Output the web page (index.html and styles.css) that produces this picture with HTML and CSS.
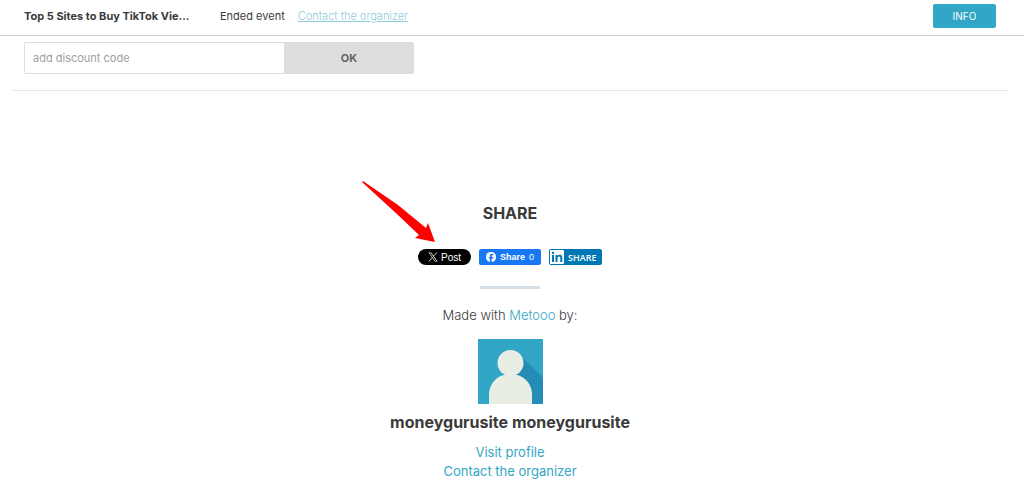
FILE: index.html
```html
<!DOCTYPE html>
<html lang="en">
<head>
	<meta charset="UTF-8">
	<title>Top 5 Sites to Buy TikTok Views</title>
	<link rel="stylesheet" href="styles.css">
</head>
<body>
	<header class="topbar">
		<strong class="event-title">Top 5 Sites to Buy TikTok Vie...</strong>
		<span class="event-status">Ended event</span>
		<a class="topbar-contact" href="#organizer">Contact the organizer</a>
		<button class="info-btn" type="button">INFO</button>
	</header>
	<main class="container">
		<form class="discount">
			<input type="text" placeholder="add discount code" aria-label="Discount code">
			<button type="button">OK</button>
		</form>
		<section class="share">
			<h2>SHARE</h2>
			<div class="share-buttons">
				<a class="share-btn x-btn" href="#x">
					<svg width="10" height="10" viewBox="0 0 24 24" fill="#fff"><path d="M14.1 10.3 22.3 1h-2l-7.100 8.100L7.600 1H1l8.600 12.200L1 23h2l7.500-8.600L16.400 23H23zm-2.700 3-.9-1.200L3.700 2.500h2.900l5.600 7.800.9 1.200 7.200 10.100h-2.900z"/></svg>
					<span>Post</span>
				</a>
				<a class="share-btn fb-btn" href="#facebook">
					<svg width="10" height="10" viewBox="0 0 24 24" fill="#fff"><path d="M24 12A12 12 0 1 0 9.300 23.700v-8H6.800V12h2.500v-1.600c0-4.100 1.900-6 5.900-6 .8 0 2.100.2 2.600.3V8c-.3 0-.8-.1-1.400-.1-2 0-2.800.8-2.800 2.700V12h4l-.7 3.700h-3.300v8.200A12 12 0 0 0 24 12z"/></svg>
					<b>Share</b>
					<span>0</span>
				</a>
				<a class="share-btn in-btn" href="#linkedin">
					<svg width="14" height="14" viewBox="0 0 14 14"><rect width="14" height="14" rx="1" fill="#fff"/><g fill="#0077b5"><circle cx="3" cy="3" r="1.200"/><path d="M2 5h2v7H2zM5.500 5h2v1c.5-.8 1.200-1.200 2.200-1.200 1.900 0 2.600 1.200 2.600 3.200v4h-2V8.400c0-1.200-.3-1.900-1.200-1.900-1.100 0-1.600.8-1.600 2V12h-2z"/></g></svg>
					<b>SHARE</b>
				</a>
			</div>
		</section>
		<section class="organizer" id="organizer">
			<p class="made-with">Made with <a href="#metooo">Metooo</a> by:</p>
			<svg class="avatar" width="65" height="65" viewBox="0 0 65 65">
				<rect width="65" height="65" fill="#32a6c6"/>
				<path d="M42 16 65 39V65H40L28 36z" fill="#258db5"/>
				<circle cx="32.500" cy="24" r="13" fill="#e8eee3"/>
				<path d="M11 65V56C11 44 20 35 32.500 35S54 44 54 56V65z" fill="#e8eee3"/>
			</svg>
			<h3>moneygurusite moneygurusite</h3>
			<a href="#profile">Visit profile</a>
			<a href="#contact">Contact the organizer</a>
		</section>
	</main>
	<svg class="arrow" width="74" height="64" viewBox="0 0 74 64"><path d="M1 0 36 24 64 47 66 42 73 61 53 57 57 54 36 34 0 1z" fill="#f00"/></svg>
</body>
</html>
```
FILE: styles.css
```css
* {
	box-sizing: border-box;
}
body {
	position: relative;
	margin: 0;
	background: #fff;
	color: #3a3a3a;
	font-family: Inter, "Liberation Sans", sans-serif;
	font-size: 13px;
}
a {
	color: #32a6c6;
	text-decoration: none;
}
button, input {
	font-family: inherit;
}
h2, h3, p {
	margin: 0;
}

.topbar {
	display: flex;
	align-items: center;
	height: 36px;
	padding: 0 28px 4px 24px;
	border-bottom: 1px solid #ccc;
	font-size: 11px;
}
.event-title {
	width: 196px;
	font-weight: 700;
	white-space: nowrap;
}
.topbar-contact {
	margin-left: 13px;
	color: #8fcbdd;
	font-weight: 300;
	text-decoration: underline;
}
.info-btn {
	width: 63px;
	height: 24px;
	margin-left: auto;
	border: 0;
	border-radius: 2px;
	background: #32a6c6;
	color: #fff;
	font-size: 10px;
}

.container {
	margin: 0 16px 0 12px;
}
.discount {
	display: flex;
	padding: 6px 12px 16px;
	border-bottom: 1px solid #e6e6e6;
}
.discount input {
	width: 260px;
	height: 32px;
	padding: 0 8px;
	border: 1px solid #ddd;
	border-right: 0;
	border-radius: 2px 0 0 2px;
	font-size: 11px;
}
.discount input::placeholder {
	color: #a0a0a0;
}
.discount button {
	width: 130px;
	height: 32px;
	border: 0;
	border-radius: 0 2px 2px 0;
	background: #ddd;
	color: #666;
	font-size: 11px;
	font-weight: 700;
}

.share {
	padding-top: 112px;
	text-align: center;
}
.share h2 {
	font-size: 16px;
	font-weight: 700;
	line-height: 20px;
}
.share-buttons {
	display: flex;
	justify-content: center;
	gap: 8px;
	margin-top: 26px;
}
.share-btn {
	display: flex;
	align-items: center;
	height: 16px;
	border-radius: 2px;
	color: #fff;
	font-size: 9px;
}
.x-btn {
	justify-content: center;
	gap: 3px;
	width: 53px;
	border-radius: 8px;
	background: #000;
	font-family: "Liberation Sans", sans-serif;
	font-size: 10px;
}
.fb-btn {
	justify-content: center;
	gap: 4px;
	width: 62px;
	background: #1877f2;
	font-family: "Liberation Sans", sans-serif;
}
.in-btn {
	gap: 4px;
	width: 53px;
	padding-left: 1px;
	background: #0077b5;
	font-family: "Open Sans", sans-serif;
}
.in-btn b {
	font-weight: 600;
}

.organizer {
	display: flex;
	flex-direction: column;
	align-items: center;
	line-height: 19px;
}
.organizer::before {
	content: "";
	width: 60px;
	height: 3px;
	margin: 21px 0 17px;
	background: #d5dde5;
}
.made-with {
	font-weight: 300;
}
.avatar {
	margin: 14px 0 8px;
}
.organizer h3 {
	margin-bottom: 11px;
	font-size: 16px;
	font-weight: 700;
	line-height: 20px;
}

.arrow {
	position: absolute;
	top: 181px;
	left: 362px;
}
```
